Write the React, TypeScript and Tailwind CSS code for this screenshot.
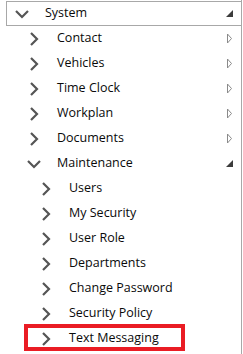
import React from "react";

type Item = { label: string; level: 1 | 2; expanded?: boolean; leaf?: boolean };

const items: Item[] = [
  { label: "Contact", level: 1 },
  { label: "Vehicles", level: 1 },
  { label: "Time Clock", level: 1 },
  { label: "Workplan", level: 1 },
  { label: "Documents", level: 1 },
  { label: "Maintenance", level: 1, expanded: true },
  { label: "Users", level: 2, leaf: true },
  { label: "My Security", level: 2, leaf: true },
  { label: "User Role", level: 2, leaf: true },
  { label: "Departments", level: 2, leaf: true },
  { label: "Change Password", level: 2, leaf: true },
  { label: "Security Policy", level: 2, leaf: true },
  { label: "Text Messaging", level: 2, leaf: true },
];

function ChevronRight() {
  return (
    <svg width="14" height="14" viewBox="0 0 14 14" className="shrink-0">
      <polyline points="4,1 10,7 4,13" fill="none" stroke="#555555" strokeWidth="2.2" />
    </svg>
  );
}

function ChevronDown() {
  return (
    <svg width="14" height="14" viewBox="0 0 14 14" className="shrink-0">
      <polyline points="1,4 7,10 13,4" fill="none" stroke="#555555" strokeWidth="2.2" />
    </svg>
  );
}

function TriOutline() {
  return (
    <svg width="7" height="11" viewBox="0 0 7 11" className="shrink-0">
      <polygon points="1.5,1 5.5,5.5 1.5,10" fill="none" stroke="#8a8a8a" strokeWidth="1" />
    </svg>
  );
}

function TriFilled() {
  return (
    <svg width="7" height="7" viewBox="0 0 7 7" className="shrink-0">
      <polygon points="7,0 7,7 0,7" fill="#3c3c3c" />
    </svg>
  );
}

export default function App() {
  return (
    <div
      className="relative w-[243px] h-[354px] bg-white overflow-hidden text-[12.5px] text-[#0a0a0a]"
      style={{ fontFamily: '"Open Sans", "Noto Sans", sans-serif' }}
    >
      <div className="w-[242px] h-[354px] border-r border-[#a8a8a8] pt-[1px]">
        <div className="ml-[6px] h-[25px] border-l border-t border-b border-[#a8a8a8] flex items-center pl-[8px] pr-[8px]">
          <ChevronDown />
          <span className="ml-[16px] leading-none">System</span>
          <span className="ml-auto">
            <TriFilled />
          </span>
        </div>
        {items.map((it) => (
          <div
            key={it.label}
            className={
              "h-[25px] flex items-center pr-[8px] " +
              (it.level === 1 ? "pl-[27px]" : "pl-[39px]")
            }
          >
            {it.expanded ? <ChevronDown /> : <ChevronRight />}
            <span className="ml-[16px] leading-none">{it.label}</span>
            {!it.leaf && (
              <span className="ml-auto">{it.expanded ? <TriFilled /> : <TriOutline />}</span>
            )}
          </div>
        ))}
      </div>
      <div className="absolute left-[24px] top-[324px] w-[161px] h-[27px] border-4 border-[#ea1c24]" />
    </div>
  );
}
